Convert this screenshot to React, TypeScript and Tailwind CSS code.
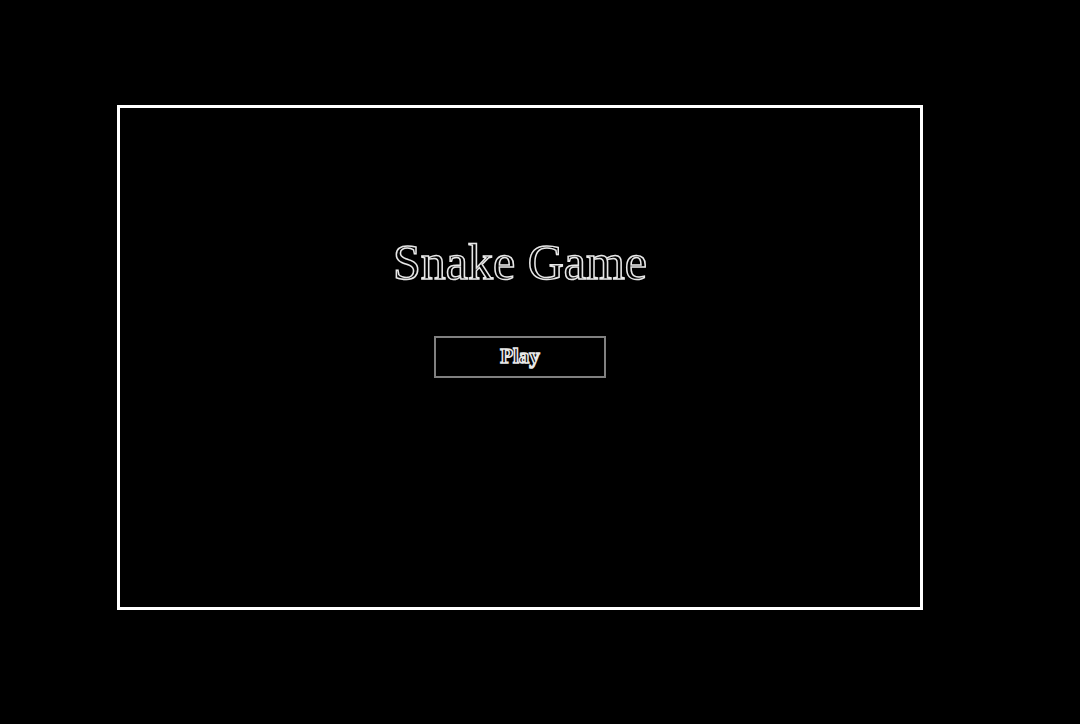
export default function App() {
  const outline = "[-webkit-text-stroke:1.5px_#e8e8e8]";

  return (
    <div className="min-h-[724px] w-full bg-black pt-[105px] pl-[117px]">
      <div className="w-[806px] h-[505px] border-[3px] border-white flex flex-col items-center pt-[126px]">
        <h1
          className={`text-[50px] leading-[57px] font-normal text-black ${outline}`}
          style={{ fontFamily: '"Liberation Serif", serif' }}
        >
          Snake Game
        </h1>
        <button
          className={`mt-[45px] w-[172px] h-[42px] border-2 border-[#808080] bg-black text-[21px] font-bold text-black ${outline}`}
          style={{ fontFamily: '"Liberation Serif", serif' }}
        >
          Play
        </button>
      </div>
    </div>
  );
}
